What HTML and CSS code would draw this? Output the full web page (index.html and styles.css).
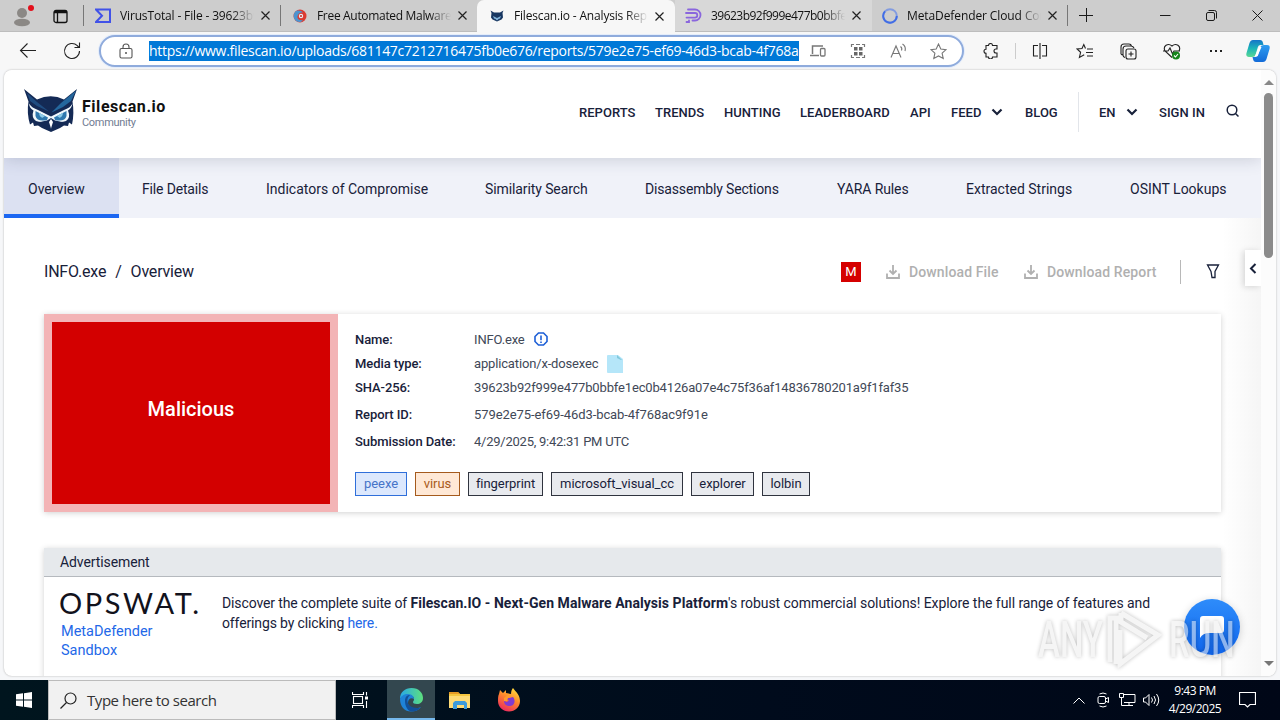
FILE: index.html
```html
<!DOCTYPE html>
<html lang="en">
<head>
<meta charset="utf-8">
<title>Filescan.io - Analysis Report</title>
<link rel="stylesheet" href="styles.css">
</head>
<body>
<div class="tabstrip">
  <div class="profile">
    <svg width="22" height="24" viewBox="0 0 22 24"><circle cx="9" cy="9" r="5" fill="#8b8885"/><ellipse cx="9" cy="18.500" rx="8" ry="3.800" fill="#8b8885"/><circle cx="18" cy="4" r="3" fill="#e3101c"/></svg>
  </div>
  <div class="tab-actions">
    <svg width="15" height="15" viewBox="0 0 15 15" fill="none" stroke="#111" stroke-width="1.300"><rect x="1" y="1.500" width="13" height="12" rx="2"/><path d="M1 3h13" stroke-width="2.500"/><path d="M4.500 4v9"/></svg>
  </div>
  <div class="tab">
    <svg class="fav" width="16" height="16" viewBox="0 0 16 16" fill="none" stroke="#4152e8" stroke-width="2"><path d="M1 1.500h14v12.500H1l6-6.200z"/></svg>
    <span class="tab-title t1">VirusTotal - File - 39623b9</span>
    <svg class="x" width="9" height="9" viewBox="0 0 9 9"><path d="M.5.5l8 8M8.500.5l-8 8"/></svg>
  </div>
  <div class="tab">
    <svg class="fav" width="16" height="16" viewBox="0 0 16 16"><circle cx="8" cy="8" r="6.500" fill="#dc3b32"/><path d="M3 4a6.500 6.500 0 0 0 1 9c3 2 6 1 7-1-4 1-7-2-5-5 1-2 3-3 5-2-2-3-6-3-8-1z" fill="#4d94cf"/><circle cx="9" cy="8" r="2.200" fill="#e8edf4"/><circle cx="9" cy="8" r="1.100" fill="#c4362f"/></svg>
    <span class="tab-title t2">Free Automated Malware</span>
    <svg class="x" width="9" height="9" viewBox="0 0 9 9"><path d="M.5.5l8 8M8.500.5l-8 8"/></svg>
  </div>
  <div class="tab active">
    <svg class="fav" width="16" height="16" viewBox="0 0 16 16"><path d="M1.500 2.500l3.500 2h6l3.500-2L13.500 5l.5 4.500-1.500 2L8 13.500l-4.500-2-1.500-2L2.500 5z" fill="#173661"/><path d="M4 8L8 10l4-2-1 2.500-1.500.5L8 12.500 6.500 11 5 10.500z" fill="#82b4dc"/></svg>
    <span class="tab-title t3">Filescan.io - Analysis Rep</span>
    <svg class="x" width="9" height="9" viewBox="0 0 9 9"><path d="M.5.5l8 8M8.500.5l-8 8"/></svg>
  </div>
  <div class="tab hover">
    <svg class="fav" width="17" height="16" viewBox="0 0 17 16" fill="none" stroke="#8a66dd" stroke-width="1.800" stroke-linecap="round"><path d="M3 1.500h7a5.500 5.500 0 0 1 0 11H7.500M1 5h9a2.300 2.300 0 0 1 0 4.600H1.500M4 12.500v1.500H1.500"/></svg>
    <span class="tab-title t4">39623b92f999e477b0bbfe</span>
    <svg class="x" width="9" height="9" viewBox="0 0 9 9"><path d="M.5.5l8 8M8.500.5l-8 8"/></svg>
  </div>
  <div class="tab last">
    <svg class="fav" width="16" height="16" viewBox="0 0 16 16" fill="none" stroke-width="1.900"><circle cx="8" cy="8" r="6.800" stroke="#829be0"/><path d="M3 3.300A6.800 6.800 0 1 0 14.800 8" stroke="#416de5"/></svg>
    <span class="tab-title t5">MetaDefender Cloud Con</span>
    <svg class="x" width="9" height="9" viewBox="0 0 9 9"><path d="M.5.5l8 8M8.500.5l-8 8"/></svg>
  </div>
  <div class="newtab"><svg width="14" height="14" viewBox="0 0 14 14" stroke="#1a1a1a" fill="none"><path d="M7.500 0v14M0 7.500h14"/></svg></div>
  <div class="wincontrols">
    <svg width="11" height="11" viewBox="0 0 11 11"><path d="M0 5.500h10.500"/></svg>
    <svg width="11" height="11" viewBox="0 0 11 11"><rect x=".5" y="2.500" width="8" height="8" rx="1.500"/><path d="M2.500.5h6a2 2 0 0 1 2 2v6"/></svg>
    <svg width="11" height="11" viewBox="0 0 11 11"><path d="M.5.5l10 10M10.500.5l-10 10"/></svg>
  </div>
</div>

<div class="toolbar">
  <div class="navbtns">
    <svg width="18" height="16" viewBox="0 0 18 16"><path d="M17 8.500H1.500M8.500 1.500l-7 7 7 7"/></svg>
    <svg width="18" height="18" viewBox="0 0 18 18"><path d="M16.500 9a7.500 7.500 0 1 1-2.200-5.300L16 5.500M16.500.5v5h-5"/></svg>
  </div>
  <div class="address">
    <svg class="lock" width="14" height="16" viewBox="0 0 14 16" fill="none" stroke="#555" stroke-width="1.100"><rect x="1" y="5.500" width="12" height="9.500" rx="1.500"/><path d="M4 5.500V4a3 3 0 0 1 6 0v1.500"/><circle cx="7" cy="10" r="1" fill="#555" stroke="none"/></svg>
    <span class="url">https://www.filescan.io/uploads/681147c7212716475fb0e676/reports/579e2e75-ef69-46d3-bcab-4f768a</span>
    <div class="addr-icons">
      <svg width="16" height="12" viewBox="0 0 16 12"><path d="M13 1H2.500v8M0 10.500h9" stroke-width="1.500"/><rect x="10.500" y="3.500" width="4.500" height="7.500" rx="1" stroke-width="1.300"/></svg>
      <svg width="16" height="16" viewBox="0 0 16 16"><path d="M4 1.500H1.500V4M12 1.500h2.500V4M1.500 12v2.500H4M14.500 12v2.500H12M6 1.500h4M6 14.500h4" stroke-width="1.200"/><path d="M4 4h3.500v3.500H4zM9 4h3.500v3.500H9zM4 9h3.500v3.500H4zM9 9h3.500v3.500H9z" fill="#666" stroke="none"/></svg>
      <svg width="17" height="16" viewBox="0 0 17 16"><path d="M1 14.500L6 3l5 11.500M3 10.500h6.500M10.500 3.500q2 1.500 1 4M12.500 1q3.800 2.500 2.500 7" stroke-width="1.100"/></svg>
      <svg width="17" height="17" viewBox="0 0 17 17"><path d="M8.500 1l2.300 5 5.200.6-3.900 3.600 1.100 5.300-4.700-2.600-4.700 2.600 1.100-5.300L1 6.600 6.200 6z" stroke-width="1.100"/></svg>
    </div>
  </div>
  <div class="tools">
    <svg width="16" height="16" viewBox="0 0 16 16"><path d="M3 2.500h2.500a2 2 0 0 1 4 0H14v3.500h-1a2 2 0 0 0 0 4h1v4H9.500a2 2 0 0 1-4 0H3v-3.700a2 2 0 1 1 0-4z"/></svg>
    <i class="divider"></i>
    <svg width="16" height="16" viewBox="0 0 16 16"><path d="M6 2.500H1.500v10.500H6M10 2.500h4.500v10.500H10M8 0v16"/></svg>
    <svg width="17" height="16" viewBox="0 0 17 16"><path d="M9.500 5.500L7.800 1.500 6 5.500 1 6l3.600 3.300-1.200 5.200 4.800-2.700M11 6h6M10 9.500h7M11 13h6"/></svg>
    <svg width="17" height="17" viewBox="0 0 17 17"><path d="M3 12Q.5 11.500 1 9.500V4Q1 1 4 1h5q2 0 2.500 2M5 14.500Q3 14 3 12V6q0-3 3-3h5q2 0 3 2"/><rect x="6" y="6" width="10" height="10" rx="2"/><path d="M11 8.500v5M8.500 11h5"/></svg>
    <svg width="18" height="17" viewBox="0 0 18 17"><path d="M9 14.500L2 8C-.5 3 5-.5 9 3c4-3.500 9.500 0 7 5M0 8h5l2-3 2.500 6L11 8h6"/><circle cx="13" cy="12.500" r="4" fill="#16851c" stroke="none"/><path d="M11 12.500l1.500 1.500 2.500-3" stroke="#fff"/></svg>
    <svg width="14" height="4" viewBox="0 0 14 4"><path d="M1 1h2v2H1zM6 1h2v2H6zM11 1h2v2h-2z" fill="#222" stroke="none"/></svg>
    <svg class="copilot" width="24" height="24" viewBox="0 0 24 24"><defs><linearGradient id="ca" x1="0" y1="0" x2="0" y2="1"><stop offset="0" stop-color="#1475c8"/><stop offset=".5" stop-color="#1bb5b8"/><stop offset="1" stop-color="#5bd894"/></linearGradient><linearGradient id="cb" x1="0" y1="0" x2="0" y2="1"><stop offset="0" stop-color="#2f9df0"/><stop offset="1" stop-color="#136bd8"/></linearGradient></defs><path d="M7 1h7q2.500 0 3 3l.5 2h-3q-2 0-2.600 2L9.500 16Q9 18 6 18H3q-3.500 0-2.500-4L3.500 4Q4.500 1 7 1z" fill="url(#ca)" stroke="none"/><path d="M17 23h-7q-2.500 0-3-3l-.5-2h3q2 0 2.600-2L14.500 8q.5-2 3.500-2h3q3.500 0 2.500 4l-3 10q-1 3-3.500 3z" fill="url(#cb)" stroke="none"/><path d="M13 8h2.500L11.500 17H9z" fill="#fff" stroke="none"/></svg>
  </div>
</div>

<div class="viewport">
 <div class="page">
  <header class="site-header">
    <div class="brand">
      <svg width="54" height="44" viewBox="0 0 54 44"><path d="M0 0l13 10.500q14-6.500 27 0L53 0l-4.500 12.500q2 12-.5 23l-3-2-1 3.500-4-.5-4 2.500-9 4-9-4-4-2.500-4 .5-1-3.500-3 2Q2.500 24 4.500 12.500z" fill="#142a55"/><path d="M52 1.500L37 14l-9.500 9.500L39 18l8-6z" fill="#24679d"/><path d="M3 4l10 9 12 9.500L13 17l-7-5z" fill="#1f4c80"/><path d="M5 14.500Q8 19 14 21l13 6.500L40 21q6-2 8.500-6.500-1 5-4.500 7 3 7-2 10.500-6 2-10 0l-5 8-5-8q-4 2-10 0-5-3.500-2.500-10.500-4-2-4.500-7z" fill="#f1f8fc"/><path d="M11.500 22l12.500 6.500-1 2.500q-10 2-11.500-4zM42.500 22L30 28.500l1 2.500q10 2 11.500-4z" fill="#2f78ae"/><path d="M15 23.800l6 3.200-2.500 1.800q-3-.5-3.500-5zM39 23.800L33 27l2.500 1.800q3-.5 3.500-5z" fill="#8ccbe8"/><path d="M23 31.500l4-2.500 4 2.500 7 1.500-5 5-6 2-6-2-5-5z" fill="#142a55"/><path d="M27 30l-2 3 2 6.500 2-6.500z" fill="#fff"/></svg>
      <div><div class="brand-name">Filescan.io</div><div class="brand-sub">Community</div></div>
    </div>
    <nav class="nav">
      <a>REPORTS</a><a>TRENDS</a><a>HUNTING</a><a>LEADERBOARD</a><a>API</a>
      <a>FEED</a><svg width="12" height="8" viewBox="0 0 12 8"><path d="M1.500 1.500L6 6l4.500-4.500"/></svg>
      <a>BLOG</a><i class="nav-div"></i><a>EN</a><svg width="12" height="8" viewBox="0 0 12 8"><path d="M1.500 1.500L6 6l4.500-4.500"/></svg>
      <a>SIGN IN</a><svg class="search" width="14" height="14" viewBox="0 0 14 14"><circle cx="6" cy="6" r="4.800"/><path d="M9.500 9.500l3 3"/></svg>
    </nav>
  </header>
  <div class="sections">
    <a class="on">Overview</a><a class="s2">File Details</a><a>Indicators of Compromise</a><a class="s4">Similarity Search</a><a class="s5">Disassembly Sections</a><a class="s6">YARA Rules</a><a>Extracted Strings</a><a>OSINT Lookups</a>
  </div>
  <main>
    <div class="titlebar">
      <div class="crumbs"><span>INFO.exe</span><span>/</span><span>Overview</span></div>
      <div class="actions">
        <b class="m">M</b>
        <svg class="dl" width="14" height="14" viewBox="0 0 14 14"><path d="M1 8.500V13h12V8.500M7 0v9M3.500 5.500L7 9l3.500-3.500"/></svg><span class="dlf">Download File</span>
        <svg class="dl" width="14" height="14" viewBox="0 0 14 14"><path d="M1 8.500V13h12V8.500M7 0v9M3.500 5.500L7 9l3.500-3.500"/></svg><span class="dlr">Download Report</span>
        <i></i>
        <svg class="filter" width="14" height="15" viewBox="0 0 14 15" fill="none" stroke="#18213a" stroke-width="1.300"><path d="M1.500 1h11L9 7.500v6H6L5 7.500z"/></svg>
      </div>
    </div>
    <section class="card">
      <div class="verdict">Malicious</div>
      <div class="facts">
        <dl>
          <dt>Name:</dt><dd>INFO.exe <svg class="info" width="14" height="14" viewBox="0 0 14 14" fill="none" stroke="#1d5fd6" stroke-width="1.600"><path d="M4.500 1h5L13 4.500v5L9.500 13h-5L1 9.500v-5zM7 3.500v4.700M7 9.500v1.500"/></svg></dd>
          <dt>Media type:</dt><dd>application/x-dosexec <svg class="file" width="16" height="18" viewBox="0 0 16 18"><path d="M1 0h10l5 4v14H1q-1 0-1-1V1q0-1 1-1z" fill="#b5e6f9"/><path d="M10 0l5 5h-1l-4-2z" fill="#80c8dc"/></svg></dd>
          <dt>SHA-256:</dt><dd>39623b92f999e477b0bbfe1ec0b4126a07e4c75f36af14836780201a9f1faf35</dd>
          <dt>Report ID:</dt><dd class="rid">579e2e75-ef69-46d3-bcab-4f768ac9f91e</dd>
          <dt>Submission Date:</dt><dd class="date">4/29/2025, 9:42:31 PM UTC</dd>
        </dl>
        <div class="tags"><span class="blue w1">peexe</span><span class="orange w2">virus</span><span class="w3">fingerprint</span><span class="w4">microsoft_visual_cc</span><span class="w5">explorer</span><span class="w6">lolbin</span></div>
      </div>
    </section>
    <section class="ad">
      <div class="ad-head">Advertisement</div>
      <div class="ad-body">
        <div class="ad-logo"><div class="opswat">OPSWAT.</div><div class="meta">MetaDefender<br>Sandbox</div></div>
        <p>Discover the complete suite of <b>Filescan.IO - Next-Gen Malware Analysis Platform</b><span class="rest">'s robust commercial solutions! Explore the full range of features and</span><br>offerings by clicking <a>here.</a></p>
      </div>
    </section>
  </main>
  <div class="drawer"></div>
  <div class="drawer-tab"><svg width="8" height="11" viewBox="0 0 8 11" fill="none" stroke="#18213a" stroke-width="2"><path d="M6.500 1L2 5.500 6.500 10"/></svg></div>
 </div>
 <div class="scrollbar"><i class="up"></i><i class="thumb"></i><i class="down"></i></div>
</div>

<div class="chat"><svg width="26" height="24" viewBox="0 0 26 24"><path d="M4 1h18q3 0 3 3v11q0 3-3 3H10q-6 0-9 5V4q0-3 3-3z" fill="#fff"/></svg></div>
<div class="watermark"><span>ANY</span><svg width="58" height="64" viewBox="0 0 58 64" fill="none" stroke="#fff" stroke-width="5"><path d="M15 5l37 22-38 29V22M4 54V10h6v46M15 5v9l26 16"/></svg><span>RUN</span></div>

<div class="taskbar">
  <div class="start"><svg width="16" height="16" viewBox="0 0 16 16" fill="#fff"><path d="M0 2.300l7-1v6.200H0zM8 1.200L16 0v7.500H8zM0 8.500h7v6.200l-7-1zM8 8.500h8V16l-8-1.200z"/></svg></div>
  <div class="searchbox"><svg width="17" height="17" viewBox="0 0 17 17" fill="none" stroke="#222" stroke-width="1.200"><circle cx="10.500" cy="6.500" r="5.500"/><path d="M6.500 10.500L.5 16.500"/></svg><span>Type here to search</span></div>
  <div class="task view"><svg width="17" height="16" viewBox="0 0 17 16" fill="none" stroke="#fff" stroke-width="1.100"><path d="M.5 0v2.500h11V0M.5 16v-2.500h11V16M14.500 0v3.500M14.500 9v7"/><rect x="1.500" y="4.500" width="9" height="7"/><path d="M13 4.500h3v3h-3z" fill="#fff" stroke="none"/></svg></div>
  <div class="task edge"><svg width="25" height="25" viewBox="0 0 25 25"><defs><linearGradient id="ea" x1="0" x2="1"><stop offset="0" stop-color="#28a8e8"/><stop offset="1" stop-color="#5de07e"/></linearGradient></defs><path d="M1 12C1 5 6 1 12.500 1 20 1 24 6 24 11c0 4-3 6-6 6-3 0-4-1-4-2 0-1 1-1 1-3S13 8 9 8c-4 0-7 2-8 4z" fill="url(#ea)"/><path d="M1 12c1-3 4-5 8-5 4 0 6 3 6 5-3-2-6 0-6 4 0 5 6 7 13 4-2 3-6 4.500-10 4.500C6 24.500 1 20 1 12z" fill="#1f83d8"/><path d="M6 14c0-4 2-6 5-6-5 4-3 13 7 13 2 0 3 0 4-1-2 3-6 4.500-9 4.500-4 0-7-5-7-10.500z" fill="#125099"/></svg></div>
  <div class="task folder"><svg width="22" height="19" viewBox="0 0 22 19"><path d="M0 2q0-1 1-1h8l2 2h10v14H0z" fill="#f5c63f"/><path d="M0 1h9l2 2H0z" fill="#e59b25"/><path d="M0 5h21v12H0z" fill="#fedb76"/><path d="M4 18v-6l2-2h10l2 2v6h-3v-4H8v4z" fill="#3c9bdc"/></svg></div>
  <div class="task fire"><svg width="24" height="24" viewBox="0 0 24 24"><defs><linearGradient id="fa" x1=".8" y1="0" x2=".3" y2="1"><stop offset="0" stop-color="#ffe13d"/><stop offset=".45" stop-color="#ff8a2b"/><stop offset="1" stop-color="#ec285f"/></linearGradient></defs><path d="M2 6l1-4 3 3 3-3v3l5 1c0-3 1-5 2-6 3 4 7 7 7 13 0 6-5 10.500-11 10.500S1 19 1 13c0-3 0-5 1-7z" fill="url(#fa)"/><path d="M7 11q2-2 5-1l4-1c2 2 3 8-3 9-4 0-6-2-6-5l3 1 2-2z" fill="#813bd0"/><path d="M7 10l4-3 3 2-3 1-1 3H7z" fill="#ff9c2c"/></svg></div>
  <div class="tray">
    <svg width="12" height="7" viewBox="0 0 12 7"><path d="M.5 6.500L6 1l5.500 5.500"/></svg>
    <svg width="13" height="16" viewBox="0 0 13 16"><rect x="1" y="4.500" width="7.500" height="7" rx="1.500"/><path d="M8.500 7l3-1.500v5L8.500 9M2.500 2Q6 0 9.500 2M2.500 14q3.500 2 7 0"/></svg>
    <svg width="17" height="14" viewBox="0 0 17 14"><path d="M5 1.500h11v8H5M10 9.500v3M5 12.500h9M.5.5h4v4h-4zM2.500 4.500v8H5"/></svg>
    <svg width="17" height="14" viewBox="0 0 17 14"><path d="M.5 5h2L6 1.500v11L2.500 9h-2zM8.500 4.500q2 2.500 0 5M11 3q3 4 0 8M13.500 1q4.500 6 0 12"/></svg>
    <div class="clock">9:43 PM<br>4/29/2025</div>
    <svg width="17" height="16" viewBox="0 0 17 16"><path d="M.5.500h16v12H11L8.500 15 6 12.500H.5z" stroke-width="1.200"/></svg>
  </div>
</div>
</body>
</html>
```
FILE: styles.css
```css
* { box-sizing: border-box; }
body { margin: 0; width: 1280px; height: 720px; overflow: hidden; position: relative; display: flex; flex-direction: column; background: #f6f7f9; font-family: Roboto, sans-serif; color: #18213a; }
svg { display: block; flex: none; }

.tabstrip { height: 32px; flex: none; display: flex; background: #cdcdcd; border-bottom: 1px solid #bdbdbd; font-family: "Open Sans", sans-serif; font-size: 12px; color: #111; }
.profile { width: 46px; padding: 4px 0 0 13px; }
.tab-actions { width: 37px; padding: 9px 0 0 7px; }
.tab { width: 197px; display: flex; align-items: center; padding: 0 10px 0 11px; position: relative; border-left: 1px solid #7d7d7d; border-image: linear-gradient(transparent 18%, #777 18%, #777 82%, transparent 82%) 1; }
.tab .fav { margin-right: 9px; }
.tab-title { width: 136px; height: 18px; line-height: 17px; white-space: nowrap; mask-image: linear-gradient(90deg, #000 112px, transparent 134px); flex: none; }
.x { fill: none; stroke: #222; stroke-width: 1.2; margin-left: auto; }
.tab.active { width: 198px; height: 32px; background: #f7f7f7; border: 0; border-radius: 7px 7px 0 0; padding-left: 12px; padding-right: 11px; }
.tab.hover { background: #d8d8d8; border: 0; padding-left: 10px; padding-right: 11px; }
.tab.last { width: 196px; border-left: 0; border-right: 1px solid #777; padding-left: 10px; padding-right: 10px; }
.t1 { letter-spacing: -.15px; } .t2 { letter-spacing: -.32px; } .t3 { letter-spacing: -.18px; }
.t4 { letter-spacing: -.52px; } .t5 { letter-spacing: -.1px; }
.newtab { width: 36px; padding: 8px 0 0 11px; }
.wincontrols { margin-left: auto; width: 138px; display: flex; align-items: center; justify-content: space-around; }
.wincontrols svg { fill: none; stroke: #1a1a1a; }

.toolbar { height: 38px; flex: none; display: flex; align-items: center; background: #f7f7f7; }
.navbtns { width: 99px; display: flex; gap: 26px; padding-left: 19px; }
.navbtns svg, .tools svg { fill: none; stroke: #222; stroke-width: 1.1; }
.address { width: 865px; height: 32px; border: 2px solid #8fabdc; border-radius: 16px; background: #fff; display: flex; align-items: center; padding-left: 18px; box-shadow: 0 0 0 1px #e4edfb; }
.url { margin-left: 16px; width: 650px; height: 20px; background: #0078d7; color: #fff; font: 14px/20px "Open Sans", sans-serif; white-space: nowrap; letter-spacing: -.285px; }
.addr-icons { display: grid; grid-template-columns: repeat(4, 40px); place-items: center; margin-left: -1px; }
.addr-icons svg { fill: none; stroke: #777; }
.tools { display: grid; grid-template-columns: 44px 5px 44px 44px 44px 44px 44px 40px; margin-left: 5px; place-items: center; }
.divider { width: 1px; height: 16px; background: #ccc; }

.viewport { height: 606px; flex: none; margin: 0 4px 4px; display: flex; background: #fff; border-radius: 8px; overflow: hidden; box-shadow: 0 0 2px #aaa; }
.page { width: 1257px; position: relative; overflow: hidden; }
.site-header { height: 88px; display: flex; position: relative; background: #fff; box-shadow: 0 1px 16px rgba(40,48,80,.2); }
.brand { display: flex; gap: 4px; padding: 19px 0 0 20px; width: 575px; flex: none; }
.brand-name { font: bold 16px/20px Roboto; color: #111; margin-top: 8px; letter-spacing: .55px; }
.brand-sub { font-size: 11px; line-height: 12px; color: #717c92; letter-spacing: -.3px; }
.nav { display: grid; grid-template-columns: 76px 69px 76px 110px 41px 40px 34px 53px 21px 27px 33px 68px 14px; align-items: center; font-size: 13px; font-weight: 500; height: 40px; margin-top: 22px; white-space: nowrap; letter-spacing: .03px; }
.nav svg { fill: none; stroke: #18213a; stroke-width: 2.200; }
.nav svg.search { stroke-width: 1.5; margin-top: -3px; margin-left: -1px; }
.nav-div { height: 40px; width: 1px; background: #e2e5ea; }
.sections { height: 60px; display: grid; grid-template-columns: 138px 124px 219px 160px 192px 129px 164px 1fr; background: #f0f2f9; font-size: 14px; line-height: 62px; white-space: nowrap; }
.sections a.on { width: 115px; height: 60px; padding-left: 24px; background: #dce1f2; border-bottom: 4px solid #1c67f2; }
.sections .s2, .sections .s5 { letter-spacing: -.16px; }
.sections .s4, .sections .s6 { letter-spacing: -.1px; }
main { padding: 0 40px; }
.titlebar { height: 96px; padding-top: 11px; display: flex; justify-content: space-between; align-items: center; }
.crumbs { display: flex; gap: 9px; font-size: 16px; letter-spacing: -.2px; }
.actions { display: flex; align-items: center; height: 24px; color: #b0b0b0; font-size: 14px; font-weight: 500; letter-spacing: .12px; }
.m { background: #d50000; color: #fff; width: 20px; height: 20px; font: 400 13px/20px Roboto; text-align: center; margin-right: 25px; }
.dl { fill: none; stroke: #b0b0b0; stroke-width: 1.8; margin-right: 9px; }
.dlf { width: 115px; } .dlr { width: 133px; }
.actions i { width: 1px; height: 24px; background: #b8b8b8; margin-right: 25px; }
.filter { margin-right: 1px; }
.card { display: flex; height: 198px; width: 1177px; box-shadow: 0 1px 6px rgba(0,0,0,.18); background: #fff; }
.verdict { width: 294px; height: 198px; border: 8px solid #f3b4b6; background: #d30000; color: #fff; font-size: 20px; font-weight: 500; display: flex; align-items: center; justify-content: center; padding-bottom: 8px; }
.facts { padding: 13px 0 0 17px; }
dl { display: grid; grid-template-columns: 119px 500px; grid-template-rows: 24px 24px 24px 30px 24px; align-items: center; margin: 0; font-size: 13px; letter-spacing: -.155px; }
dt { font-weight: 500; color: #18213a; letter-spacing: -.08px; }
dd { margin: 0; color: #414857; display: flex; align-items: center; gap: 9px; white-space: nowrap; }
.rid { letter-spacing: -.08px; }
.date { letter-spacing: -.24px; }
.file { margin-top: 2px; }
.tags { display: flex; gap: 8px; margin-top: 19px; font-size: 13px; letter-spacing: -.05px; }
.tags span { height: 24px; border: 1px solid #30343f; background: #e8eaee; line-height: 22px; text-align: center; white-space: nowrap; }
.tags .blue { border-color: #2f6fda; background: #dce8fd; color: #4674c8; }
.tags .orange { border-color: #a55a1c; background: #ffe8d5; color: #a95b20; }
.w1 { width: 52px; } .w2 { width: 45px; } .w3 { width: 75px; } .w4 { width: 132px; } .w5 { width: 63px; } .w6 { width: 48px; }
.ad { margin-top: 36px; height: 180px; width: 1177px; box-shadow: 0 1px 6px rgba(0,0,0,.18); }
.ad-head { height: 29px; background: #e6e9ec; border-bottom: 1px solid #b5b9be; padding-left: 16px; font-size: 14px; line-height: 28px; letter-spacing: -.1px; }
.ad-body { display: flex; padding-left: 16px; }
.ad-logo { width: 162px; }
.opswat { font: 400 29px/34px Lato; letter-spacing: 2.600px; color: #12121c; margin-top: 9px; margin-left: -1px; white-space: nowrap; }
.meta { font-size: 14.500px; line-height: 19px; color: #2368e8; margin: 2px 0 0 1px; letter-spacing: 0; }
.ad p { margin: 16px 0 0; font-size: 14px; line-height: 20px; white-space: nowrap; letter-spacing: -.13px; }
.ad p b { letter-spacing: .05px; }
.rest { letter-spacing: -.06px; }
.ad p a { color: #2368e8; }
.drawer { position: absolute; left: 1218px; top: 148px; width: 40px; height: 460px; background: linear-gradient(90deg, rgba(0,0,0,0), rgba(0,0,0,.04)); }
.drawer-tab { position: absolute; left: 1241px; top: 180px; width: 16px; height: 36px; background: #fff; padding: 13px 0 0 4px; box-shadow: -2px 1px 6px rgba(0,0,0,.14); }
.scrollbar { width: 15px; background: #fcfcfc; display: flex; flex-direction: column; align-items: center; padding-top: 10px; }
.up { border: 5px solid transparent; border-top: 0; border-bottom: 5px solid #888; }
.thumb { width: 9px; height: 165px; margin-top: 8px; border-radius: 5px; background: #8b8b8b; }
.down { border: 5px solid transparent; border-bottom: 0; border-top: 5px solid #777; margin-top: 403px; }

.chat { position: absolute; left: 1184px; top: 599px; width: 56px; height: 56px; border-radius: 50%; background: linear-gradient(#2e8cfa, #1066ee); padding: 16px 0 0 15px; box-shadow: 0 2px 8px rgba(0,0,0,.18); }
.watermark { position: absolute; left: 1038px; top: 608px; display: flex; align-items: center; gap: 5px; height: 64px; color: #eee; font: 500 50px/64px Roboto; filter: drop-shadow(0 0 2px rgba(0,0,0,.45)); opacity: .55; }
.watermark svg { stroke: #eee; }
.watermark span { transform: scaleX(.66); transform-origin: left; width: 63px; }

.taskbar { height: 40px; flex: none; display: flex; background: linear-gradient(90deg, #00151e, #000b1c 60%, #000717); }
.start { width: 48px; padding: 12px 0 0 16px; }
.searchbox { width: 288px; background: #f1f1f1; border: 1px solid #bbb; display: flex; align-items: center; gap: 10px; padding-left: 11px; font: 15px "Open Sans"; color: #333; }
.searchbox span { letter-spacing: -.45px; }
.task { width: 49px; display: flex; align-items: center; justify-content: center; }
.task.view { width: 51px; padding-right: 3px; }
.task.edge { width: 48px; background: #33474f; border-bottom: 2px solid #76b9ed; }
.tray { margin-left: auto; display: grid; grid-template-columns: 24px 24px 24px 24px 64px 40px; place-items: center; padding-right: 13px; }
.tray svg { fill: none; stroke: #fff; stroke-width: 1; }
.clock { color: #fff; font: 12px/18px "Open Sans"; text-align: center; letter-spacing: -.5px; }
```
